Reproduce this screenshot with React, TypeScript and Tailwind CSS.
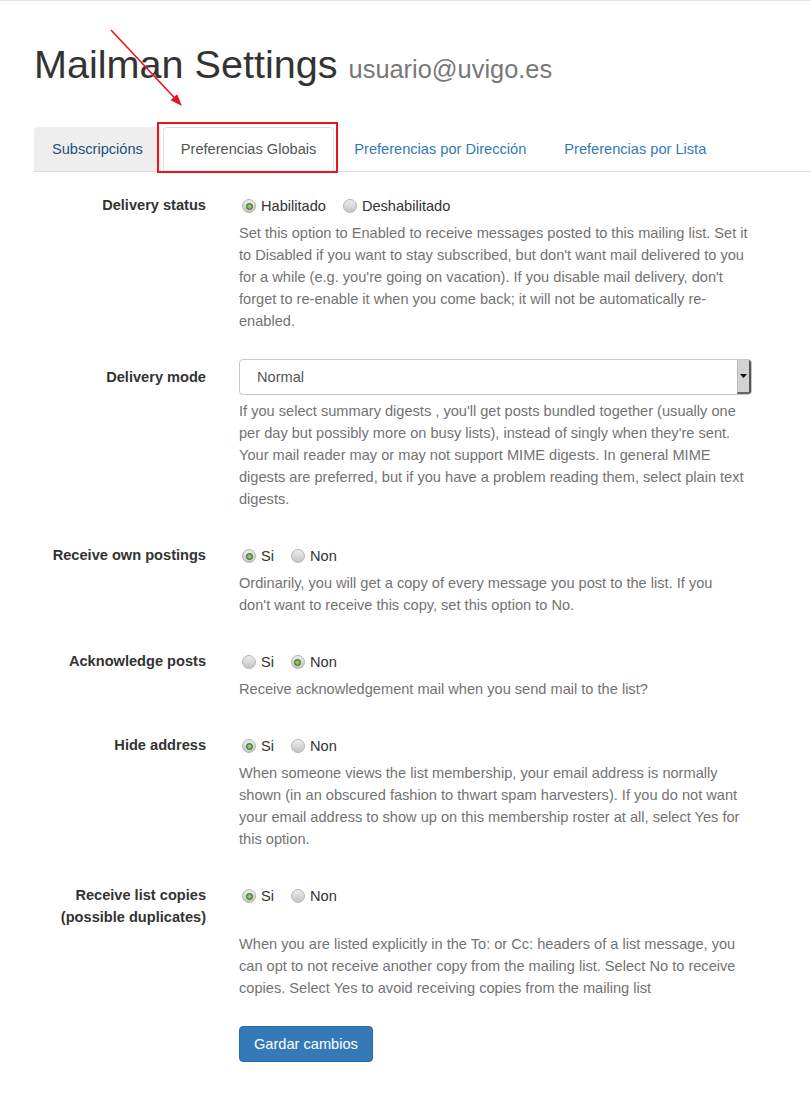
import React from "react";

function Radio({ checked, label }: { checked?: boolean; label: string }) {
  return (
    <span className="flex items-center">
      <span className="ml-[3px] mr-[5px] flex h-[14px] w-[14px] items-center justify-center rounded-full border border-[#b4b4b4] bg-[linear-gradient(180deg,#ececec,#c4c4c4)]">
        {checked && (
          <span className="h-[7px] w-[7px] rounded-full border border-[#3f5a2d] bg-[radial-gradient(circle,#9bd873,#5f9c3d)]" />
        )}
      </span>
      <span>{label}</span>
    </span>
  );
}

function RadioGroup({ options, selected }: { options: string[]; selected: number }) {
  return (
    <div className="flex h-[22px] items-center gap-[14px]">
      {options.map((o, i) => (
        <Radio key={o} label={o} checked={i === selected} />
      ))}
    </div>
  );
}

function Row({
  label,
  children,
}: {
  label: React.ReactNode;
  children: React.ReactNode;
}) {
  return (
    <div className="mb-[16px] grid grid-cols-[172px_513px] gap-x-[33px]">
      <div className="pt-[7px] text-right font-bold text-[#333]">{label}</div>
      <div>{children}</div>
    </div>
  );
}

function Help({ children, mt = "mt-[5px]" }: { children: React.ReactNode; mt?: string }) {
  return <p className={`${mt} mb-[11px] pr-[2px] text-[#737373]`}>{children}</p>;
}

export default function App() {
  return (
    <div className="relative min-h-[1093px] overflow-hidden border-t border-[#e5e5e5] bg-white font-['Liberation_Sans',Arial,sans-serif] text-[14.6px] leading-[22px] text-[#333]">
      <div className="pl-[34px]">
        <h1 className="mt-[41px] text-[39.6px] leading-[44px] font-normal text-[#333]">
          Mailman Settings<span className="ml-[11px] text-[25.4px] text-[#777]">usuario@uvigo.es</span>
        </h1>

        <div className="mt-[36px] flex border-b border-[#ddd]">
          <div className="mr-[2px] rounded-t-[4px] border border-transparent bg-[#eee] px-[17px] py-[10px] text-[#23527c]">
            Subscripcións
          </div>
          <div className="-mb-px mr-[2px] rounded-t-[4px] border border-[#ddd] border-b-white bg-white px-[17px] py-[10px] text-[#555]">
            Preferencias Globais
          </div>
          <div className="mr-[2px] rounded-t-[4px] border border-transparent px-[17px] py-[10px] text-[#337ab7]">
            Preferencias por Dirección
          </div>
          <div className="mr-[2px] rounded-t-[4px] border border-transparent px-[17px] py-[10px] text-[#337ab7]">
            Preferencias por Lista
          </div>
        </div>

        <form className="mt-[15px]">
          <Row label="Delivery status">
            <div className="pt-[8px]">
              <RadioGroup options={["Habilitado", "Deshabilitado"]} selected={0} />
            </div>
            <Help>
              Set this option to Enabled to receive messages posted to this mailing list. Set it to
              Disabled if you want to stay subscribed, but don't want mail delivered to you for a
              while (e.g. you're going on vacation). If you disable mail delivery, don't forget to
              re-enable it when you come back; it will not be automatically re-enabled.
            </Help>
          </Row>

          <Row label="Delivery mode">
            <div className="flex h-[36px] overflow-hidden rounded-[4px] border border-[#c8c8c8] bg-white">
              <div className="flex flex-1 items-center pl-[17px] text-[#555]">Normal</div>
              <div className="flex w-[14px] items-center justify-center border-r-2 border-b-2 border-l border-r-[#555] border-b-[#666] border-l-[#bbb] bg-[#d2d2d2]">
                <svg width="7" height="4" viewBox="0 0 7 4">
                  <path d="M0 0h7L3.5 4z" fill="#111" />
                </svg>
              </div>
            </div>
            <Help>
              If you select summary digests , you'll get posts bundled together (usually one per day
              but possibly more on busy lists), instead of singly when they're sent. Your mail
              reader may or may not support MIME digests. In general MIME digests are preferred, but
              if you have a problem reading them, select plain text digests.
            </Help>
          </Row>

          <Row label="Receive own postings">
            <div className="pt-[8px]">
              <RadioGroup options={["Si", "Non"]} selected={0} />
            </div>
            <Help>
              Ordinarily, you will get a copy of every message you post to the list. If you{" "}
              {"don't\u00a0want"} to receive this copy, set this option to No.
            </Help>
          </Row>

          <Row label="Acknowledge posts">
            <div className="pt-[8px]">
              <RadioGroup options={["Si", "Non"]} selected={1} />
            </div>
            <Help>Receive acknowledgement mail when you send mail to the list?</Help>
          </Row>

          <Row label="Hide address">
            <div className="pt-[8px]">
              <RadioGroup options={["Si", "Non"]} selected={0} />
            </div>
            <Help>
              When someone views the list membership, your email address is normally shown (in an
              obscured fashion to thwart spam harvesters). If you do not want your email address to
              show up on this membership roster at all, select Yes for this option.
            </Help>
          </Row>

          <Row
            label={
              <>
                Receive list copies
                <br />
                (possible duplicates)
              </>
            }
          >
            <div className="pt-[8px]">
              <RadioGroup options={["Si", "Non"]} selected={0} />
            </div>
            <Help mt="mt-[26px]">
              When you are listed explicitly in the To: or Cc: headers of a list message, you can opt
              to not receive another copy from the mailing list. Select No to receive copies. Select
              Yes to avoid receiving copies from the mailing list
            </Help>
          </Row>

          <div className="grid grid-cols-[172px_513px] gap-x-[33px]">
            <div />
            <div>
              <button
                type="button"
                className="h-[36px] rounded-[4px] border border-[#2e6da4] bg-[#337ab7] px-[14px] text-white"
              >
                Gardar cambios
              </button>
            </div>
          </div>
        </form>
      </div>

      <div className="pointer-events-none absolute left-[157px] top-[121px] h-[51px] w-[181px] border-2 border-[#e8141f]" />
      <svg
        className="pointer-events-none absolute left-0 top-0"
        width="811"
        height="200"
        viewBox="0 0 811 200"
      >
        <line x1="111" y1="29" x2="177" y2="99.5" stroke="#e8141f" strokeWidth="1.6" />
        <polygon points="182,105 170.6,99.2 177.1,93.2" fill="#e8141f" />
      </svg>
    </div>
  );
}
